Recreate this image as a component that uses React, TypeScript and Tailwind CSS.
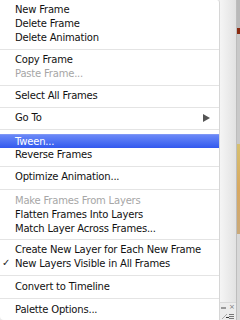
import React from "react";

type Item =
  | { kind: "row"; label: string; disabled?: boolean; selected?: boolean; check?: boolean; sub?: boolean }
  | { kind: "sep"; h: string };

const items: Item[] = [
  { kind: "row", label: "New Frame" },
  { kind: "row", label: "Delete Frame" },
  { kind: "row", label: "Delete Animation" },
  { kind: "sep", h: "h-[8px]" },
  { kind: "row", label: "Copy Frame" },
  { kind: "row", label: "Paste Frame...", disabled: true },
  { kind: "sep", h: "h-[8px]" },
  { kind: "row", label: "Select All Frames" },
  { kind: "sep", h: "h-[8px]" },
  { kind: "row", label: "Go To", sub: true },
  { kind: "sep", h: "h-[9px]" },
  { kind: "row", label: "Tween...", selected: true },
  { kind: "row", label: "Reverse Frames" },
  { kind: "sep", h: "h-[8px]" },
  { kind: "row", label: "Optimize Animation..." },
  { kind: "sep", h: "h-[10px]" },
  { kind: "row", label: "Make Frames From Layers", disabled: true },
  { kind: "row", label: "Flatten Frames Into Layers" },
  { kind: "row", label: "Match Layer Across Frames..." },
  { kind: "sep", h: "h-[7px]" },
  { kind: "row", label: "Create New Layer for Each New Frame" },
  { kind: "row", label: "New Layers Visible in All Frames", check: true },
  { kind: "sep", h: "h-[9px]" },
  { kind: "row", label: "Convert to Timeline" },
  { kind: "sep", h: "h-[9px]" },
  { kind: "row", label: "Palette Options..." },
];

export default function App() {
  return (
    <div
      className="w-[240px] h-[320px] flex overflow-hidden bg-[#e9e9e9]"
      style={{ fontFamily: '"DejaVu Sans", "Liberation Sans", sans-serif' }}
    >
      <div className="w-[220px] h-full bg-white border-r border-[#d6d6d6] rounded-tr-[3px] rounded-bl-[4px] pt-[3px] flex flex-col">
        {items.map((it, i) =>
          it.kind === "sep" ? (
            <div key={i} className={`${it.h} flex items-center`}>
              <div className="w-full h-px bg-[#e4e4e4]" />
            </div>
          ) : (
            <div
              key={i}
              className={`relative h-[14px] flex items-center pl-[15px] pr-[8px] text-[10px] leading-none tracking-[-0.2px] ${
                it.selected
                  ? "bg-gradient-to-b from-[#6a88f7] to-[#3358ee] border-t border-[#7f97f5] text-white"
                  : it.disabled
                  ? "text-[#a6a6a6]"
                  : "text-[#111]"
              }`}
            >
              {it.check && (
                <span className="absolute left-[2px] top-[1px] text-[10px] text-[#222]">✓</span>
              )}
              <span className="flex-1">{it.label}</span>
              {it.sub && (
                <svg width="7" height="8" viewBox="0 0 7 8" className="mr-[1px]">
                  <path d="M0 0 L7 4 L0 8 Z" fill="#555" />
                </svg>
              )}
            </div>
          )
        )}
      </div>
      <div className="w-[16px] h-full flex flex-col bg-gradient-to-r from-[#f5f5f5] to-[#e2e2e2]">
        <div className="flex-1" />
        <div className="h-[18px] bg-[#ececec] border-t border-[#d9d9d9] flex flex-col items-center justify-center gap-[2px]">
          <div className="flex items-center gap-[3px]">
            <div className="w-[5px] h-[2px] bg-[#999]" />
            <span className="text-[7px] leading-none text-[#777]">×</span>
          </div>
          <svg width="14" height="6" viewBox="0 0 14 6">
            <path d="M1 6 L6 1" stroke="#aaa" strokeWidth="1" />
            <rect x="5" y="4" width="3" height="1" fill="#333" />
            <rect x="8" y="1" width="5" height="1" fill="#777" />
            <rect x="8" y="3" width="5" height="1" fill="#777" />
            <rect x="8" y="5" width="5" height="1" fill="#777" />
          </svg>
        </div>
      </div>
      <div className="w-[4px] h-full flex flex-col bg-[#c8c8c8] border-l border-[#bdbdbd]">
        <div className="h-[28px] bg-[#b9b9b9]" />
        <div className="h-[6px] bg-[#8a2a10]" />
        <div className="h-[110px] bg-[#c9c9c9]" />
        <div className="h-[90px] bg-gradient-to-b from-[#d6c070] via-[#d8a860] to-[#c9a97a]" />
        <div className="flex-1 bg-[#d8d8d8]" />
      </div>
    </div>
  );
}
